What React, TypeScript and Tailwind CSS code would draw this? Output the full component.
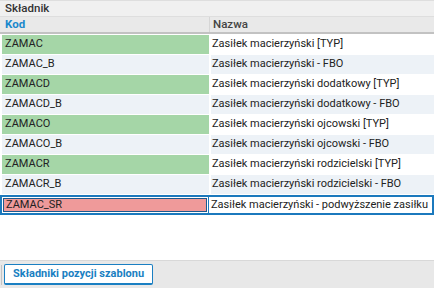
type Row = { kod: string; nazwa: string; typ?: boolean };

const ROWS: Row[] = [
  { kod: "ZAMAC", nazwa: "Zasiłek macierzyński [TYP]", typ: true },
  { kod: "ZAMAC_B", nazwa: "Zasiłek macierzyński - FBO" },
  { kod: "ZAMACD", nazwa: "Zasiłek macierzyński dodatkowy [TYP]", typ: true },
  { kod: "ZAMACD_B", nazwa: "Zasiłek macierzyński dodatkowy - FBO" },
  { kod: "ZAMACO", nazwa: "Zasiłek macierzyński ojcowski [TYP]", typ: true },
  { kod: "ZAMACO_B", nazwa: "Zasiłek macierzyński ojcowski - FBO" },
  { kod: "ZAMACR", nazwa: "Zasiłek macierzyński rodzicielski [TYP]", typ: true },
  { kod: "ZAMACR_B", nazwa: "Zasiłek macierzyński rodzicielski - FBO" },
];

export default function App() {
  return (
    <div
      className="w-[434px] h-[288px] bg-white flex flex-col overflow-hidden text-[11px] text-[#222]"
      style={{ fontFamily: "Roboto, 'Liberation Sans', sans-serif" }}
    >
      {/* Group caption */}
      <div className="h-[17px] shrink-0 bg-[#f0f0f0] border-t border-[#c6c6c6] border-b border-[#dedede] pl-[5px] flex items-center text-[11.5px] font-medium text-[#333]">
        Składnik
      </div>

      {/* Column headers */}
      <div className="h-[17px] shrink-0 flex bg-[#e9e9e9] border-b-2 border-[#c2c2c2] text-[11.5px] font-medium">
        <div className="w-[209px] shrink-0 pl-[5px] flex items-center text-[#1a88cc] font-bold">Kod</div>
        <div className="flex-1 pl-[3px] flex items-center text-[#444] border-l border-[#d6d6d6]">Nazwa</div>
      </div>

      {/* Grid rows */}
      <div className="flex flex-col pt-[1px]">
        {ROWS.map((r) => (
          <div key={r.kod} className="h-[20px] flex border-b border-white">
            <div
              className={`w-[207px] ml-[2px] shrink-0 pl-[3px] flex items-center ${
                r.typ ? "bg-[#a5d6a7]" : "bg-[#edf2f7]"
              }`}
            >
              {r.kod}
            </div>
            <div
              className={`flex-1 ml-[2px] pl-[1px] flex items-center whitespace-nowrap overflow-hidden ${
                r.typ ? "bg-white" : "bg-[#edf2f7]"
              }`}
            >
              {r.nazwa}
            </div>
          </div>
        ))}
        {/* Selected row */}
        <div className="h-[20px] flex border-2 border-[#1b79bd] bg-white">
          <div className="w-[206px] shrink-0 p-[1px]">
            <div className="h-full bg-[#ef9a9a] border border-[#1c5a8e] pl-[2px] flex items-center">ZAMAC_SR</div>
          </div>
          <div className="flex-1 pl-[2px] flex items-center whitespace-nowrap overflow-hidden border-l border-[#1b79bd]">
            Zasiłek macierzyński - podwyższenie zasiłku
          </div>
        </div>
      </div>

      <div className="flex-1" />

      {/* Bottom toolbar */}
      <div className="h-[28px] shrink-0 bg-[#e8e8e8] border-t border-[#d8d8d8] flex items-center pl-[1px] gap-[1px]">
        <div className="w-[1px] h-[20px] bg-[#c4c4c4]" />
        <button className="h-[21px] ml-[1px] px-[8px] bg-white border border-[#1a7fc2] border-b-2 rounded-[2px] text-[#1a7fc2] text-[11px] font-bold flex items-center">
          Składniki pozycji szablonu
        </button>
      </div>
    </div>
  );
}
